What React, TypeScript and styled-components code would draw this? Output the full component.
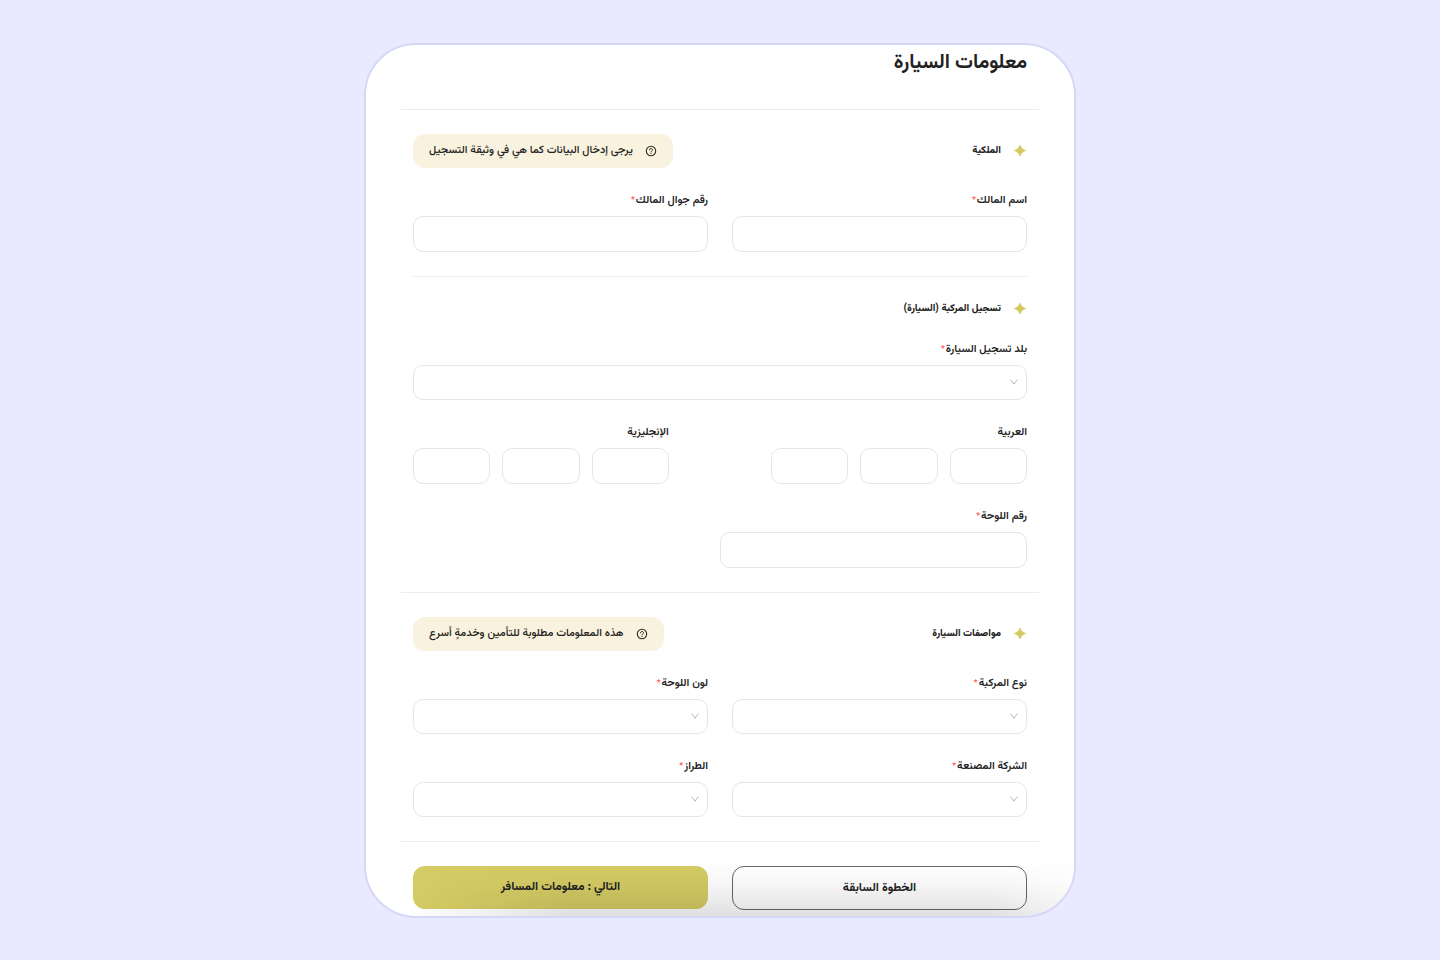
import React, { useId } from "react";
import styled, { createGlobalStyle, css } from "styled-components";

const GlobalStyle = createGlobalStyle`
  *, *::before, *::after { box-sizing: border-box; }
  body {
    margin: 0;
    background: #e9eaff;
    color: #222222;
    font-family: Vazirmatn, "Noto Sans Arabic", "Noto Sans", sans-serif;
  }
  input, select, button { font: inherit; color: inherit; }
`;

const Page = styled.main`
  display: flex;
  justify-content: center;
  align-items: center;
  min-height: 100vh;
  padding: 24px;
`;

const Card = styled.form`
  position: relative;
  width: 100%;
  max-width: 712px;
  padding: 0 35px 6px;
  overflow: hidden;
  background: #ffffff;
  border: 2px solid #d6d7f7;
  border-radius: 52px;
`;

const BottomShade = styled.div`
  position: absolute;
  inset: auto 0 0;
  height: 56px;
  pointer-events: none;
  background: linear-gradient(to top, rgba(0, 0, 0, 0.12), rgba(0, 0, 0, 0.03) 60%, transparent);
  mask-image: linear-gradient(to right, transparent 6%, #000 28%, #000 88%, rgba(0, 0, 0, 0.4));
`;

const Title = styled.h1`
  margin: 0;
  padding: 2px 12px 30px;
  font-size: 20px;
  font-weight: 700;
  line-height: 32px;
`;

const Section = styled.section<{ $inset?: boolean }>`
  display: flex;
  flex-direction: column;
  gap: 24px;
  padding: 24px 0;
  ${(p) =>
    p.$inset
      ? css`margin: 0 12px;`
      : css`padding-left: 12px; padding-right: 12px;`}
  border-top: 1px solid #ebebeb;
`;

const SectionHead = styled.header`
  display: flex;
  justify-content: space-between;
  align-items: center;
`;

const Heading = styled.h2`
  display: flex;
  align-items: center;
  gap: 12px;
  margin: 0;
  font-size: 10px;
  font-weight: 800;
  line-height: 16px;
`;

const Hint = styled.p`
  display: flex;
  align-items: center;
  gap: 12px;
  margin: 0;
  padding: 8px 16px;
  background: #f9f2de;
  border-radius: 12px;
  font-size: 11px;
  font-weight: 500;
  line-height: 18px;
`;

const Columns = styled.div`
  display: grid;
  grid-template-columns: 1fr 1fr;
  gap: 24px;
`;

const FieldBox = styled.div<{ $half?: boolean }>`
  display: flex;
  flex-direction: column;
  gap: 6px;
  width: ${(p) => (p.$half ? "50%" : "auto")};
`;

const labelText = css`
  font-size: 11px;
  font-weight: 600;
  line-height: 18px;
`;

const Label = styled.label`
  ${labelText}
`;

const Required = styled.span`
  margin-right: 1px;
  color: #ff4d4f;
  font-size: 9px;
  font-weight: 400;
`;

const controlLook = css`
  width: 100%;
  min-width: 0;
  padding: 0 12px;
  background: #ffffff;
  border: 1px solid #e6e6e6;
  border-radius: 10px;
  font-size: 12px;
  outline-color: #d5cc65;
`;

const TextInput = styled.input`
  ${controlLook}
  height: 36px;
`;

const SelectInput = styled.select`
  ${controlLook}
  display: block;
  height: 35px;
  appearance: none;
`;

const SelectWrap = styled.div`
  position: relative;
`;

const Chevron = styled.svg`
  position: absolute;
  top: 12px;
  right: 8px;
  pointer-events: none;
`;

const PlateRow = styled.div`
  display: flex;
  justify-content: space-between;
`;

const PlateGroup = styled.fieldset`
  width: calc(100% * 5 / 12);
  min-width: 0;
  margin: 0;
  padding: 0;
  border: 0;
`;

const PlateLegend = styled.legend`
  ${labelText}
  margin-bottom: 6px;
  padding: 0;
`;

const PlateCells = styled.div`
  display: grid;
  grid-template-columns: repeat(3, 1fr);
  gap: 12px;
`;

const Actions = styled(Columns)`
  align-items: start;
  padding: 24px 12px 0;
  border-top: 1px solid #ebebeb;
`;

const Button = styled.button<{ $primary?: boolean }>`
  height: ${(p) => (p.$primary ? "43px" : "44px")};
  padding: 0 16px;
  background: ${(p) => (p.$primary ? "#d5cc65" : "#ffffff")};
  border: ${(p) => (p.$primary ? "0" : "1px solid #666666")};
  border-radius: 12px;
  font-size: 12px;
  font-weight: 700;
  cursor: pointer;
`;

const SparkIcon = () => (
  <svg width="14" height="14" viewBox="0 0 14 14" aria-hidden="true">
    <path
      d="M7 1.2Q8.1 5.4 12.6 6.5Q8.1 7.6 7 12Q5.9 7.6 1.4 6.5Q5.9 5.4 7 1.2Z"
      fill="#d3c95f"
      stroke="#d3c95f"
      strokeWidth=".8"
      strokeLinejoin="round"
    />
  </svg>
);

const QuestionIcon = () => (
  <svg width="12" height="12" viewBox="0 0 12 12" fill="none" stroke="#2b2a22" strokeLinecap="round" aria-hidden="true">
    <circle cx="6" cy="6" r="4.7" strokeWidth="1.1" />
    <path d="M4.5 4.9a1.5 1.4 0 1 1 2.2 1.2C6.2 6.4 6 6.6 6 7" strokeWidth="1" />
    <circle cx="6" cy="8.5" r=".6" fill="#2b2a22" stroke="none" />
  </svg>
);

interface FieldProps {
  label: string;
  required?: boolean;
  half?: boolean;
  type?: "text" | "tel" | "select";
}

function Field({ label, required = true, half, type = "text" }: FieldProps) {
  const id = useId();
  return (
    <FieldBox $half={half}>
      <Label htmlFor={id}>
        {label}
        {required && <Required>*</Required>}
      </Label>
      {type === "select" ? (
        <SelectWrap>
          <SelectInput id={id} />
          <Chevron width="10" height="10" viewBox="0 0 10 10" fill="none" stroke="#b8b8b8" aria-hidden="true">
            <path d="M1.6 2.6 5 7.2 8.4 2.6" />
          </Chevron>
        </SelectWrap>
      ) : (
        <TextInput id={id} type={type} />
      )}
    </FieldBox>
  );
}

function PlateLetters({ label }: { label: string }) {
  return (
    <PlateGroup>
      <PlateLegend>{label}</PlateLegend>
      <PlateCells>
        {[1, 2, 3].map((n) => (
          <TextInput key={n} maxLength={1} aria-label={`${label} ${n}`} />
        ))}
      </PlateCells>
    </PlateGroup>
  );
}

function SectionTitle({ title, hint }: { title: string; hint?: string }) {
  return (
    <SectionHead>
      <Heading>
        <SparkIcon />
        {title}
      </Heading>
      {hint && (
        <Hint>
          <QuestionIcon />
          {hint}
        </Hint>
      )}
    </SectionHead>
  );
}

export default function App() {
  return (
    <Page dir="rtl" lang="ar">
      <GlobalStyle />
      <Card>
        <Title>معلومات السيارة</Title>

        <Section>
          <SectionTitle title="الملكية" hint="يرجى إدخال البيانات كما هي في وثيقة التسجيل" />
          <Columns>
            <Field label="اسم المالك" />
            <Field label="رقم جوال المالك" type="tel" />
          </Columns>
        </Section>

        <Section $inset>
          <SectionTitle title="تسجيل المركبة (السيارة)" />
          <Field label="بلد تسجيل السيارة" type="select" />
          <PlateRow>
            <PlateLetters label="العربية" />
            <PlateLetters label="الإنجليزية" />
          </PlateRow>
          <Field label="رقم اللوحة" half />
        </Section>

        <Section>
          <SectionTitle title="مواصفات السيارة" hint="هذه المعلومات مطلوبة للتأمين وخدمةٍ أسرع" />
          <Columns>
            <Field label="نوع المركبة" type="select" />
            <Field label="لون اللوحة" type="select" />
            <Field label="الشركة المصنعة" type="select" />
            <Field label="الطراز" type="select" />
          </Columns>
        </Section>

        <Actions>
          <Button type="button">الخطوة السابقة</Button>
          <Button type="button" $primary>
            التالي : معلومات المسافر
          </Button>
        </Actions>
        <BottomShade />
      </Card>
    </Page>
  );
}
